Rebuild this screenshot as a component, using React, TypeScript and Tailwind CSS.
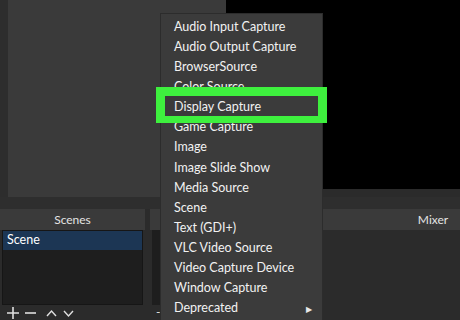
import React from 'react'

const ITEMS = [
  'Audio Input Capture',
  'Audio Output Capture',
  'BrowserSource',
  'Color Source',
  'Display Capture',
  'Game Capture',
  'Image',
  'Image Slide Show',
  'Media Source',
  'Scene',
  'Text (GDI+)',
  'VLC Video Source',
  'Video Capture Device',
  'Window Capture',
  'Deprecated',
]

function SourceMenu() {
  return (
    <div className="absolute left-[160px] top-[13px] w-[163px] h-[330px] bg-[#3b3b3b] border border-[#2c2c2c] pt-[3px]">
      {ITEMS.map((label) => (
        <div key={label} className="relative h-[20.14px] flex items-center pl-[13px] text-[12.5px] text-[#f2f2f2] whitespace-nowrap">
          {label}
          {label === 'Deprecated' && (
            <span className="absolute right-[10px] text-[8px] text-[#e8e8e8]">▶</span>
          )}
        </div>
      ))}
    </div>
  )
}

export default function App() {
  return (
    <div
      className="relative w-[460px] h-[320px] overflow-hidden bg-[#2b2b2b] text-[#e4e4e4]"
      style={{ fontFamily: 'Lato, "Open Sans", sans-serif' }}
    >
      {/* preview */}
      <div className="flex items-start h-[197px]">
        <div className="w-[8px] shrink-0 h-full bg-[#2d2d2d]" />
        <div className="w-[218px] shrink-0 h-full bg-[#3a3a3a]" />
        <div className="flex-1 h-[189px] bg-black" />
      </div>
      <div className="h-[12px] bg-[#2e2e2e]" />

      {/* docks */}
      <div className="flex h-[111px] gap-[5px]">
        <div className="w-[145px] shrink-0 flex flex-col">
          <div className="h-[21px] bg-[#3a3a3a] flex items-center justify-center text-[12px]">Scenes</div>
          <div className="mx-[2px] h-[75px] bg-[#1e1e1e] border border-[#161616]">
            <div className="h-[19px] bg-[#1c3654] pl-[4px] flex items-center text-[12.5px] text-white">Scene</div>
          </div>
          <div className="flex items-center gap-[6px] pl-[7px] pt-[2px] text-[#e0e0e0]">
            <svg width="12" height="12" viewBox="0 0 12 12" stroke="currentColor" strokeWidth="1.6">
              <path d="M6 0v12M0 6h12" />
            </svg>
            <svg width="11" height="12" viewBox="0 0 11 12" stroke="currentColor" strokeWidth="1.6">
              <path d="M0 6h11" />
            </svg>
            <svg width="11" height="12" viewBox="0 0 11 12" fill="none" stroke="currentColor" strokeWidth="1.4" className="ml-[4px]">
              <path d="M1 9l4.5-5 4.5 5" />
            </svg>
            <svg width="11" height="12" viewBox="0 0 11 12" fill="none" stroke="currentColor" strokeWidth="1.4">
              <path d="M1 4l4.5 5 4.5-5" />
            </svg>
          </div>
        </div>
        <div className="w-[160px] shrink-0 flex flex-col">
          <div className="h-[21px] bg-[#3a3a3a]" />
          <div className="mx-[2px] h-[75px] bg-[#1e1e1e]" />
          <div className="pl-[6px] text-[12px] leading-[14px]">-</div>
        </div>
        <div className="w-[236px] shrink-0 flex flex-col">
          <div className="h-[21px] bg-[#3a3a3a] flex items-center justify-center text-[12px]">Mixer</div>
          <div className="flex-1 bg-[#2b2b2b]" />
        </div>
      </div>

      <SourceMenu />

      {/* highlight box */}
      <div className="absolute left-[156px] top-[87px] w-[171px] h-[36px] border-[9px] border-b-[7px] border-[#3ef03e]" />
    </div>
  )
}
